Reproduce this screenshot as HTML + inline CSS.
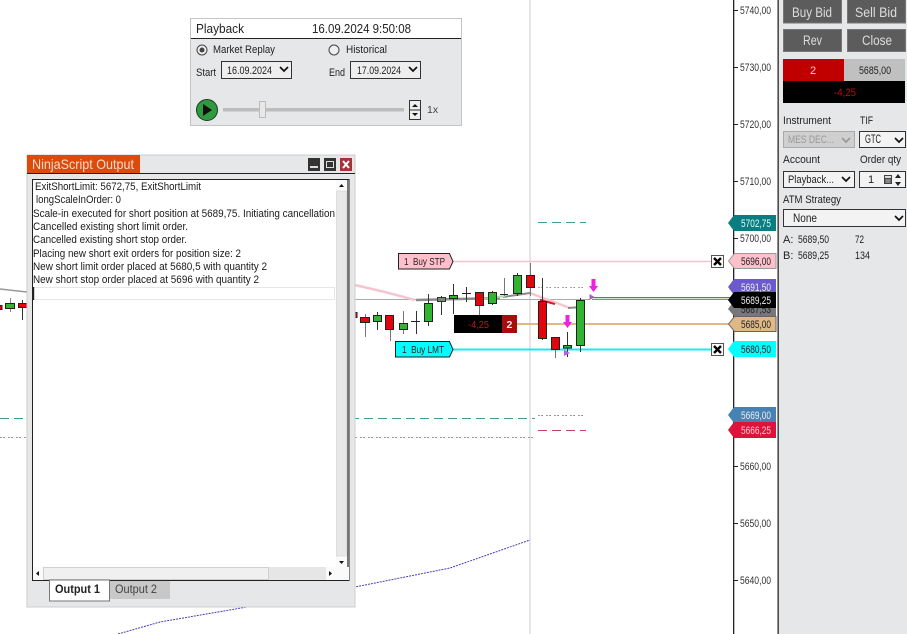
<!DOCTYPE html>
<html><head><meta charset="utf-8"><style>
html,body{margin:0;padding:0;background:#fff;width:907px;height:634px;overflow:hidden}
svg{display:block;filter:blur(.3px)}
text{font-family:"Liberation Sans",sans-serif;font-size:11px;fill:#222;white-space:pre}
.ax{font-size:11px;fill:#333}
.mk{font-size:11px}
.o{font-size:11px;fill:#1a1a1a}
.g{fill:#32b432;stroke:#222;stroke-width:1}
.r{fill:#e0060c;stroke:#222;stroke-width:1}
.ch{fill:none;stroke:#111;stroke-width:1.7}
</style></head><body>
<svg width="907" height="634" viewBox="0 0 907 634" xmlns="http://www.w3.org/2000/svg">
<rect width="907" height="634" fill="#fff"/>

<!-- chart lines -->
<line x1="530" y1="0" x2="530" y2="634" stroke="#dcdede" stroke-width="1.500"/>
<polyline points="118,634 160,622 247,607 355,587 450,568 530,540" fill="none" stroke="#4a3fb5" stroke-width="1" stroke-dasharray="2 1"/>
<line x1="0" y1="418.500" x2="535" y2="418.500" stroke="#3f9c9c" stroke-dasharray="9 5"/>
<line x1="0" y1="437.500" x2="535" y2="437.500" stroke="#999" stroke-dasharray="2 1 2 3"/>
<line x1="538" y1="222.500" x2="586" y2="222.500" stroke="#3f9c9c" stroke-dasharray="9 5"/>
<line x1="538" y1="287.500" x2="586" y2="287.500" stroke="#a5a5b5" stroke-dasharray="2 1 2 3"/>
<line x1="538" y1="415.500" x2="586" y2="415.500" stroke="#999" stroke-dasharray="2 1 2 3"/>
<line x1="538" y1="430.500" x2="586" y2="430.500" stroke="#c8405f" stroke-dasharray="9 5"/>
<line x1="355" y1="299.500" x2="590" y2="299.500" stroke="#aaa"/>
<line x1="453" y1="261.500" x2="712" y2="261.500" stroke="#ffc0cb" stroke-width="1.500"/>
<line x1="453" y1="349.500" x2="712" y2="349.500" stroke="#1ee8ee" stroke-width="2"/>
<line x1="517" y1="324" x2="730" y2="324" stroke="#deb887" stroke-width="2"/>
<rect x="592" y="297" width="138" height="3" fill="#cfe8cf"/>
<line x1="592" y1="297.500" x2="730" y2="297.500" stroke="#3c8f44"/>
<line x1="592" y1="299.500" x2="730" y2="299.500" stroke="#5aaa60"/>

<!-- MA lines -->
<polyline points="355,285 385,292 415,300" fill="none" stroke="#f7c5d0" stroke-width="2.500"/>
<polyline points="530,293 570,308" fill="none" stroke="#f7c5d0" stroke-width="2.500"/>
<polyline points="0,289 27,292" fill="none" stroke="#999" stroke-width="1.500"/>
<polyline points="416,300 500,298" fill="none" stroke="#8a8a8a" stroke-width="2.500"/>
<polyline points="503,297 530,293" fill="none" stroke="#8a8a8a" stroke-width="2"/>
<polyline points="483,299 505,296" fill="none" stroke="#a9e0a9" stroke-width="2"/>
<polyline points="568,308 581,307" fill="none" stroke="#8a8a8a" stroke-width="2"/>
<polyline points="540,300 555,304" fill="none" stroke="#d02020" stroke-width="2"/>

<!-- wicks -->
<g stroke="#333" stroke-width="1" shape-rendering="crispEdges">
<line x1="10.500" y1="298" x2="10.500" y2="312" stroke="#888"/><line x1="22.500" y1="300" x2="22.500" y2="320"/>
<line x1="365.500" y1="314" x2="365.500" y2="337" stroke="#777"/><line x1="377.500" y1="312" x2="377.500" y2="330"/><line x1="390.500" y1="315" x2="390.500" y2="341" stroke="#777"/>
<line x1="403.500" y1="311" x2="403.500" y2="334" stroke="#777"/><line x1="416.500" y1="311" x2="416.500" y2="334"/><line x1="428.500" y1="294" x2="428.500" y2="326"/>
<line x1="441.500" y1="296" x2="441.500" y2="315"/><line x1="453.500" y1="284" x2="453.500" y2="314"/><line x1="466.500" y1="287" x2="466.500" y2="302"/>
<line x1="479.500" y1="292" x2="479.500" y2="315" stroke="#777"/><line x1="492.500" y1="291" x2="492.500" y2="305"/><line x1="504.500" y1="278" x2="504.500" y2="296" stroke="#777"/>
<line x1="517.500" y1="273" x2="517.500" y2="296"/><line x1="530.500" y1="263" x2="530.500" y2="296" stroke="#777"/><line x1="542.500" y1="278" x2="542.500" y2="340"/>
<line x1="555.500" y1="349" x2="555.500" y2="358" stroke="#777"/><line x1="567.500" y1="332" x2="567.500" y2="357"/><line x1="580.500" y1="298" x2="580.500" y2="352"/>
<line x1="411" y1="321.500" x2="420" y2="321.500" stroke="#222"/>
<line x1="462" y1="293.500" x2="471" y2="293.500" stroke="#222"/>
<line x1="500" y1="294.500" x2="508" y2="294.500" stroke="#222"/>
</g>
<!-- bodies -->
<rect class="r" x="-3" y="305.500" width="5" height="4"/>
<rect class="g" x="5.500" y="303.500" width="9" height="5"/>
<rect class="r" x="18.500" y="303.500" width="9" height="4"/>
<rect class="r" x="354" y="312.500" width="3" height="5"/>
<rect class="r" x="360.500" y="317.500" width="9" height="5"/>
<rect class="g" x="373.500" y="315.500" width="8" height="6"/>
<rect class="r" x="385.500" y="315.500" width="8" height="14"/>
<rect class="g" x="399.500" y="323.500" width="8" height="6"/>
<rect class="g" x="424.500" y="303.500" width="8" height="18"/>
<rect x="437.500" y="297.500" width="8" height="4" fill="#6f8f6f" stroke="#333"/>
<rect class="g" x="449.500" y="295.500" width="8" height="3"/>
<rect class="r" x="475.500" y="292.500" width="8" height="13"/>
<rect class="g" x="488.500" y="292.500" width="8" height="11"/>
<rect class="g" x="513.500" y="275.500" width="8" height="18"/>
<rect class="r" x="526.500" y="275.500" width="8" height="12"/>
<rect class="r" x="538.500" y="301.500" width="8" height="37"/>
<rect class="r" x="551.500" y="337.500" width="8" height="12"/>
<rect class="g" x="563.500" y="345.500" width="8" height="2.500"/>
<rect class="g" x="576.500" y="300.500" width="8" height="45"/>

<!-- arrows -->
<path d="M565.500 315h4v7h2.500l-4.500 6-4.500-6h2.500z" fill="#ee22dd"/>
<path d="M591.500 279h4v7h2.500l-4.500 6-4.500-6h2.500z" fill="#ee22dd"/>
<path d="M564 350l6 3-6 3z" fill="#b060e0"/>
<path d="M589.500 294l5 3-5 3z" fill="#a060c0"/>

<!-- order labels -->
<path d="M398.500 253.500h51l3.500 8-3.500 7.500h-51z" fill="#ffc0cb" stroke="#222"/>
<text x="404" y="265" textLength="41" lengthAdjust="spacingAndGlyphs" style="font-size:10.500px">1  Buy STP</text>
<path d="M395.500 341.500h54l3.500 8-3.500 7.500h-54z" fill="#00ffff" stroke="#222"/>
<text x="402" y="353" textLength="42" lengthAdjust="spacingAndGlyphs" style="font-size:10.500px">1  Buy LMT</text>
<rect x="454" y="315" width="48" height="18" fill="#000"/>
<rect x="502" y="315" width="15" height="18" fill="#a80c0c"/>
<text x="468" y="328" textLength="21" lengthAdjust="spacingAndGlyphs" style="font-size:10.500px;fill:#b81818">-4,25</text>
<text x="506.500" y="328" style="font-size:10.500px;font-weight:bold;fill:#eee">2</text>

<!-- X boxes -->
<g>
<rect x="711.500" y="255.500" width="12" height="12" fill="#fff" stroke="#555"/>
<path d="M714 258l7 7M721 258l-7 7" stroke="#000" stroke-width="2.400"/>
<rect x="711.500" y="343.500" width="12" height="12" fill="#fff" stroke="#555"/>
<path d="M714 346l7 7M721 346l-7 7" stroke="#000" stroke-width="2.400"/>
</g>

<!-- axis -->
<rect x="733" y="0" width="1.300" height="634" fill="#222"/>
<rect x="777.500" y="0" width="1.300" height="634" fill="#222"/>
<g stroke="#222"><line x1="733" y1="10.500" x2="738" y2="10.500"/><line x1="733" y1="67.500" x2="738" y2="67.500"/><line x1="733" y1="124.500" x2="738" y2="124.500"/><line x1="733" y1="181.500" x2="738" y2="181.500"/><line x1="733" y1="238.500" x2="738" y2="238.500"/><line x1="733" y1="466.500" x2="738" y2="466.500"/><line x1="733" y1="523.500" x2="738" y2="523.500"/><line x1="733" y1="580.500" x2="738" y2="580.500"/></g>
<text class="ax" x="740" y="14" textLength="31" lengthAdjust="spacingAndGlyphs">5740,00</text>
<text class="ax" x="740" y="71" textLength="31" lengthAdjust="spacingAndGlyphs">5730,00</text>
<text class="ax" x="740" y="128" textLength="31" lengthAdjust="spacingAndGlyphs">5720,00</text>
<text class="ax" x="740" y="185" textLength="31" lengthAdjust="spacingAndGlyphs">5710,00</text>
<text class="ax" x="740" y="242" textLength="31" lengthAdjust="spacingAndGlyphs">5700,00</text>
<text class="ax" x="740" y="470" textLength="31" lengthAdjust="spacingAndGlyphs">5660,00</text>
<text class="ax" x="740" y="527" textLength="31" lengthAdjust="spacingAndGlyphs">5650,00</text>
<text class="ax" x="740" y="584" textLength="31" lengthAdjust="spacingAndGlyphs">5640,00</text>

<!-- price markers -->
<path d="M728 223l6-8h42v16h-42z" fill="#0a7d80"/>
<text class="mk" x="741" y="227" textLength="30" lengthAdjust="spacingAndGlyphs" style="fill:#dff">5702,75</text>
<path d="M728.500 261l6-7.500h41.500v15h-41.500z" fill="#ffc0cb" stroke="#999"/>
<text class="mk" x="741" y="265" textLength="30" lengthAdjust="spacingAndGlyphs">5696,00</text>
<path d="M728 287l6-8h42v16h-42z" fill="#6a5acd"/>
<text class="mk" x="741" y="291" textLength="30" lengthAdjust="spacingAndGlyphs" style="fill:#eee">5691,50</text>
<path d="M728 309l6-8h42v15h-42z" fill="#777"/>
<text class="mk" x="741" y="313" textLength="30" lengthAdjust="spacingAndGlyphs" style="fill:#222">5687,53</text>
<path d="M728 300l6-8h42v16h-42z" fill="#000"/>
<text class="mk" x="741" y="304" textLength="30" lengthAdjust="spacingAndGlyphs" style="fill:#eee">5689,25</text>
<path d="M728.500 324l6-7.500h41.500v15h-41.500z" fill="#deb887" stroke="#666"/>
<text class="mk" x="741" y="328" textLength="30" lengthAdjust="spacingAndGlyphs">5685,00</text>
<path d="M728 349l6-8h42v16h-42z" fill="#00ffff"/>
<text class="mk" x="741" y="353" textLength="30" lengthAdjust="spacingAndGlyphs">5680,50</text>
<path d="M728 415l6-8h42v16h-42z" fill="#4682b4"/>
<text class="mk" x="741" y="419" textLength="30" lengthAdjust="spacingAndGlyphs" style="fill:#eee">5669,00</text>
<path d="M728 430l6-8h42v16h-42z" fill="#dc143c"/>
<text class="mk" x="741" y="434" textLength="30" lengthAdjust="spacingAndGlyphs" style="fill:#fcc">5666,25</text>

<!-- right panel -->
<rect x="779" y="0" width="128" height="634" fill="#e6e7e8"/>
<g fill="#5c5c5c" stroke="#777">
<rect x="783.500" y="-1" width="58" height="24"/><rect x="847.500" y="-1" width="58" height="24"/>
<rect x="783.500" y="29.500" width="58" height="22"/><rect x="847.500" y="29.500" width="58" height="22"/>
</g>
<text x="792" y="17" textLength="40" lengthAdjust="spacingAndGlyphs" style="font-size:13.500px;fill:#ddd">Buy Bid</text>
<text x="855" y="17" textLength="42" lengthAdjust="spacingAndGlyphs" style="font-size:13.500px;fill:#ddd">Sell Bid</text>
<text x="803" y="45" textLength="19" lengthAdjust="spacingAndGlyphs" style="font-size:13.500px;fill:#ddd">Rev</text>
<text x="862" y="45" textLength="30" lengthAdjust="spacingAndGlyphs" style="font-size:13.500px;fill:#ddd">Close</text>
<rect x="783" y="59" width="61" height="22" fill="#c00000"/>
<rect x="844" y="59" width="61" height="22" fill="#c0c0c0"/>
<rect x="783" y="81" width="122" height="22" fill="#000"/>
<text x="810" y="74" style="font-size:11px;fill:#f0d0d0">2</text>
<text x="859" y="74" textLength="32" lengthAdjust="spacingAndGlyphs" style="font-size:11px">5685,00</text>
<text x="834" y="96" textLength="22" lengthAdjust="spacingAndGlyphs" style="font-size:11px;fill:#b01010">-4,25</text>

<text x="783" y="124" textLength="48" lengthAdjust="spacingAndGlyphs">Instrument</text>
<text x="860" y="124" textLength="13" lengthAdjust="spacingAndGlyphs">TIF</text>
<rect x="783.500" y="131.500" width="71" height="16" fill="#cfcfcf" stroke="#aaa"/>
<text x="788" y="143" textLength="46" lengthAdjust="spacingAndGlyphs" style="fill:#999">MES DEC...</text>
<path class="ch" d="M842 138l4 4 4-4" style="stroke:#999"/>
<rect x="859.500" y="131.500" width="46" height="16" fill="#f3f3f3" stroke="#333"/>
<text x="865" y="143" textLength="16" lengthAdjust="spacingAndGlyphs" style="font-size:12px">GTC</text>
<path class="ch" d="M895 138l4 4 4-4"/>

<text x="783" y="163" textLength="37" lengthAdjust="spacingAndGlyphs">Account</text>
<text x="860" y="163" textLength="41" lengthAdjust="spacingAndGlyphs">Order qty</text>
<rect x="783.500" y="171.500" width="71" height="16" fill="#f3f3f3" stroke="#333"/>
<text x="788" y="183" textLength="46" lengthAdjust="spacingAndGlyphs">Playback...</text>
<path class="ch" d="M842 177l4 4 4-4"/>
<rect x="859.500" y="171.500" width="46" height="16" fill="#f3f3f3" stroke="#333"/>
<text x="868" y="183">1</text>
<rect x="884" y="175" width="8" height="9" fill="#444"/><rect x="885" y="176" width="6" height="2" fill="#ddd"/>
<path d="M885 180h6M885 182h6M887 179v4M889 179v4" stroke="#ddd" stroke-width=".5"/>
<path d="M895 178l3-4 3 4zM895 182l3 4 3-4z" fill="#222"/>

<text x="783" y="203" textLength="58" lengthAdjust="spacingAndGlyphs">ATM Strategy</text>
<rect x="783.500" y="209.500" width="122" height="17" fill="#f3f3f3" stroke="#333"/>
<text x="793" y="222" textLength="24" lengthAdjust="spacingAndGlyphs" style="font-size:12px">None</text>
<path class="ch" d="M895 216l4 4 4-4"/>
<text x="783" y="243">A:</text><text x="798" y="243" textLength="31" lengthAdjust="spacingAndGlyphs">5689,50</text><text x="855" y="243" textLength="9" lengthAdjust="spacingAndGlyphs">72</text>
<text x="783" y="259">B:</text><text x="798" y="259" textLength="31" lengthAdjust="spacingAndGlyphs">5689,25</text><text x="855" y="259" textLength="15" lengthAdjust="spacingAndGlyphs">134</text>

<!-- Playback -->
<rect x="190.500" y="18.500" width="271" height="107" fill="#e6e7e8" stroke="#c4c4c4"/>
<rect x="191" y="19" width="270" height="19" fill="#fff"/>
<rect x="191" y="38" width="270" height="1" fill="#222"/>
<text x="196" y="33" textLength="48" lengthAdjust="spacingAndGlyphs" style="font-size:13px">Playback</text>
<text x="312" y="33" textLength="99" lengthAdjust="spacingAndGlyphs" style="font-size:12.500px">16.09.2024 9:50:08</text>
<circle cx="202" cy="50" r="5" fill="#eee" stroke="#444"/><circle cx="202" cy="50" r="2.500" fill="#444"/>
<text x="213" y="53" textLength="62" lengthAdjust="spacingAndGlyphs">Market Replay</text>
<circle cx="334" cy="50" r="5" fill="#eee" stroke="#444"/>
<text x="346" y="53" textLength="41" lengthAdjust="spacingAndGlyphs">Historical</text>
<text x="196" y="76" textLength="20" lengthAdjust="spacingAndGlyphs">Start</text>
<rect x="221.500" y="61.500" width="70" height="17" fill="#eee" stroke="#333"/>
<text x="227" y="74" textLength="45" lengthAdjust="spacingAndGlyphs" style="font-size:11px">16.09.2024</text>
<path class="ch" d="M280 67l4 4 4-4"/>
<text x="329" y="76" textLength="16" lengthAdjust="spacingAndGlyphs">End</text>
<rect x="350.500" y="61.500" width="70" height="17" fill="#eee" stroke="#333"/>
<text x="357" y="74" textLength="44" lengthAdjust="spacingAndGlyphs" style="font-size:11px">17.09.2024</text>
<path class="ch" d="M409 67l4 4 4-4"/>
<circle cx="207" cy="110" r="10.500" fill="#2f9a3f" stroke="#1c3a20"/>
<path d="M203 104l9 6-9 6z" fill="#111"/>
<rect x="223" y="108" width="181" height="3.500" fill="#bdbdbd"/>
<rect x="259.500" y="101.500" width="6" height="16" fill="#e8e8e8" stroke="#bbb"/>
<rect x="409.500" y="100.500" width="11" height="19" fill="#eee" stroke="#333"/>
<line x1="409" y1="110" x2="421" y2="110" stroke="#333"/>
<path d="M412 107l3-3 3 3z M412 113h6l-3 3z" fill="#111"/>
<text x="427" y="113" style="font-size:10.500px;fill:#444">1x</text>

<!-- NinjaScript window -->
<rect x="27" y="155" width="328" height="452" fill="#e6e7e8" stroke="#ccc"/>
<rect x="27" y="155" width="113" height="18" fill="#dc4a0c"/>
<rect x="27" y="173" width="328" height="1" fill="#222"/>
<text x="32" y="169" textLength="102" lengthAdjust="spacingAndGlyphs" style="font-size:14px;fill:#f8dccb">NinjaScript Output</text>
<rect x="308" y="158" width="12" height="13" fill="#333"/><rect x="310" y="166" width="8" height="2" fill="#ddd"/>
<rect x="324" y="158" width="12" height="13" fill="#333"/><rect x="326.500" y="161.500" width="7" height="6" fill="none" stroke="#ddd"/>
<rect x="340" y="158" width="12" height="13" fill="#a5343a"/><path d="M343 161l6 7M349 161l-6 7" stroke="#fff" stroke-width="2"/>

<rect x="32.500" y="179.500" width="316.500" height="401" fill="#fff" stroke="#222"/>
<rect x="347" y="180" width="2" height="400" fill="#777"/>
<text class="o" x="35" y="190" textLength="166" lengthAdjust="spacingAndGlyphs">ExitShortLimit: 5672,75, ExitShortLimit</text>
<text class="o" x="36" y="203" textLength="85" lengthAdjust="spacingAndGlyphs">longScaleInOrder: 0</text>
<text class="o" x="33" y="217" textLength="302" lengthAdjust="spacingAndGlyphs">Scale-in executed for short position at 5689,75. Initiating cancellation</text>
<text class="o" x="33" y="230" textLength="155" lengthAdjust="spacingAndGlyphs">Cancelled existing short limit order.</text>
<text class="o" x="33" y="243" textLength="154" lengthAdjust="spacingAndGlyphs">Cancelled existing short stop order.</text>
<text class="o" x="33" y="257" textLength="208" lengthAdjust="spacingAndGlyphs">Placing new short exit orders for position size: 2</text>
<text class="o" x="33" y="270" textLength="234" lengthAdjust="spacingAndGlyphs">New short limit order placed at 5680,5 with quantity 2</text>
<text class="o" x="33" y="283" textLength="226" lengthAdjust="spacingAndGlyphs">New short stop order placed at 5696 with quantity 2</text>
<rect x="33.500" y="287.500" width="301" height="12" fill="#fff" stroke="#e6e6e6"/>
<rect x="33" y="287" width="1.200" height="13" fill="#222"/>

<!-- v scrollbar -->
<rect x="336" y="180" width="11" height="387" fill="#fafafa"/>
<rect x="336.500" y="191" width="10" height="365" fill="#e8e8e8" stroke="#ddd"/>
<path d="M339 187l2.500-3 2.500 3z" fill="#111"/>
<path d="M339 561h5l-2.500 3z" fill="#111"/>
<!-- h scrollbar -->
<rect x="33" y="567" width="303" height="13" fill="#e6e6e6"/>
<rect x="33" y="567" width="10" height="13" fill="#fafafa"/>
<rect x="43.500" y="567.500" width="225" height="12" fill="#f0f0f0" stroke="#d0d0d0"/>
<rect x="326" y="567" width="23" height="13" fill="#fafafa"/>
<path d="M39 571v5l-3-2.500z" fill="#111"/>
<path d="M329 571v5l3-2.500z" fill="#111"/>
<rect x="33" y="580" width="316" height="1" fill="#222"/>
<!-- tabs -->
<rect x="110" y="581" width="60" height="18" fill="#c8c8c8"/>
<rect x="49.500" y="580" width="60" height="21" fill="#fff" stroke="#777"/>
<text x="55" y="593" textLength="45" lengthAdjust="spacingAndGlyphs" style="font-weight:bold;font-size:11.500px">Output 1</text>
<text x="115" y="593" textLength="42" lengthAdjust="spacingAndGlyphs" style="fill:#444;font-size:11.500px">Output 2</text>
</svg>
</body></html>
